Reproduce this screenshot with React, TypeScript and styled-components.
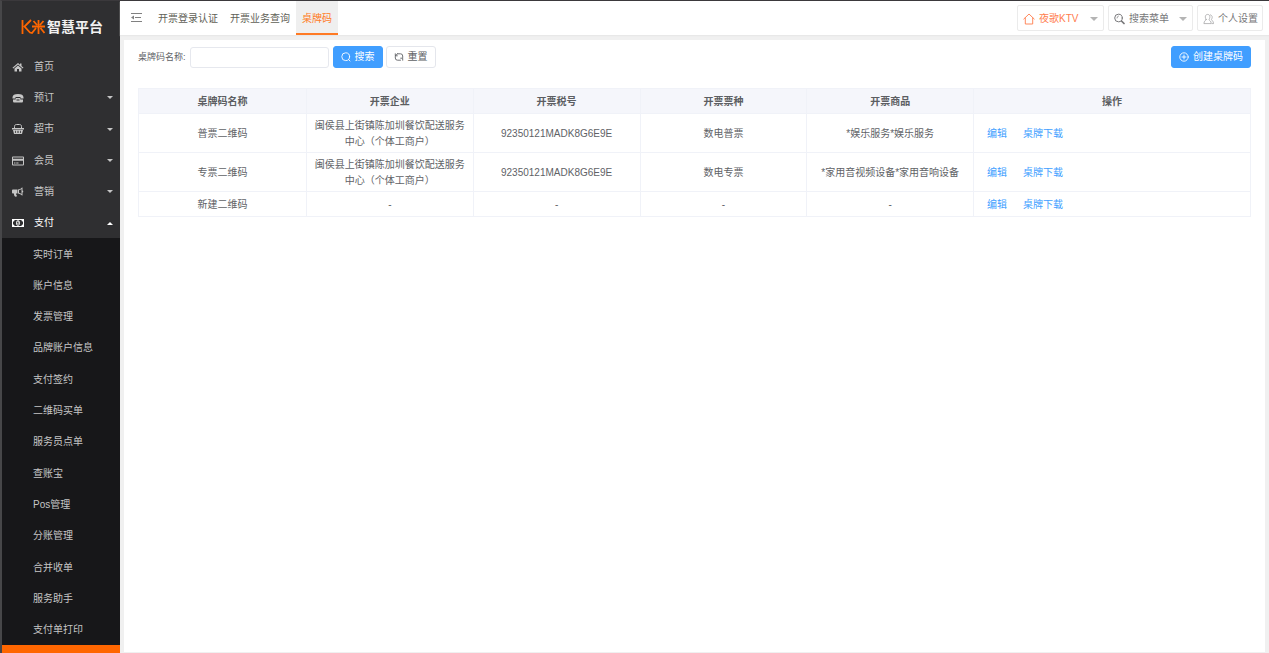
import React from "react";
import styled, { createGlobalStyle, css } from "styled-components";

const Global = createGlobalStyle`
  *, *::before, *::after { box-sizing: border-box; }
  body {
    margin: 0;
    background: #f0f0f0;
    color: #606266;
    font: 10px/16px "Liberation Sans", "Noto Sans CJK SC", sans-serif;
  }
  button, input { font: inherit; color: inherit; }
  ul { margin: 0; padding: 0; list-style: none; }
  a { color: inherit; text-decoration: none; }
`;

const Page = styled.div`
  display: flex;
  min-height: 100vh;
  border-top: 1px solid #3b393c;
  border-left: 2px solid #474749;
`;

const Sidebar = styled.aside`
  display: flex;
  flex-direction: column;
  flex: 0 0 118px;
  background: #2f2f31;
  color: #c6c6c6;
`;

const Brand = styled.a`
  display: flex;
  align-items: center;
  gap: 1px;
  height: 49px;
  padding: 2px 0 0 19px;
  color: #f2f2f2;
  font-size: 14px;
  font-weight: 700;
  line-height: 20px;
  white-space: nowrap;
  svg { flex: none; }
`;

const Nav = styled.nav`
  display: flex;
  flex: 1;
`;

const Menu = styled.ul`
  display: grid;
  grid-auto-rows: minmax(24px, 1fr);
  flex: 1;
`;

const MenuItem = styled.li`
  display: flex;
`;

const SubMenuItem = styled(MenuItem)`
  background: #171719;
`;

const menuRow = css`
  display: flex;
  align-items: center;
  flex: 1;
  border: 0;
  background: none;
  text-align: left;
  cursor: pointer;
`;

const MenuButton = styled.button<{ $open?: boolean }>`
  ${menuRow}
  gap: 10px;
  padding: 2px 7px 0 10px;
  color: ${(p) => (p.$open ? "#ffffff" : "#c6c6c6")};
  > svg { width: 12px; height: 10px; flex: none; }
`;

const SubLink = styled.a`
  ${menuRow}
  padding: 2px 0 0 31px;
`;

const Caret = styled.span<{ $up?: boolean; $size?: number; $color?: string }>`
  margin-left: auto;
  border: ${(p) => p.$size ?? 3}px solid transparent;
  ${(p) =>
    p.$up
      ? css`border-top: 0; border-bottom-color: currentColor;`
      : css`border-bottom: 0; border-top-color: currentColor;`}
  ${(p) => p.$color && css`color: ${p.$color};`}
`;

const SidebarFoot = styled.div`
  height: 8px;
  background: #ff6600;
`;

const Main = styled.div`
  display: flex;
  flex-direction: column;
  flex: 1;
  min-width: 0;
`;

const TopBar = styled.header`
  display: flex;
  height: 34px;
  padding-right: 6px;
  background: #ffffff;
  box-shadow: 0 1px 1px #e8e8e8;
`;

const Collapse = styled.button`
  display: grid;
  place-items: center;
  width: 32px;
  padding: 0;
  border: 0;
  background: none;
  color: #808080;
`;

const Tabs = styled.nav`
  display: flex;
  flex: 1;
`;

const Tab = styled.a<{ $active?: boolean }>`
  display: flex;
  align-items: center;
  padding: 4px 6px 0;
  border-bottom: 2px solid ${(p) => (p.$active ? "#ff7a24" : "transparent")};
  background: ${(p) => (p.$active ? "#efefef" : "transparent")};
  color: ${(p) => (p.$active ? "#ff7a24" : "#5f5f57")};
  white-space: nowrap;
`;

const Tools = styled.div`
  display: flex;
  align-items: center;
  gap: 4px;
`;

const ToolButton = styled.button<{ $accent?: boolean; $width: number }>`
  display: flex;
  align-items: center;
  gap: 4px;
  width: ${(p) => p.$width}px;
  height: 26px;
  padding: 1px 5px 0;
  border: 1px solid #ebebeb;
  border-radius: 2px;
  background: #ffffff;
  color: ${(p) => (p.$accent ? "#ff7d4d" : "#77777a")};
  white-space: nowrap;
  svg { flex: none; }
`;

const Panel = styled.main`
  flex: 1;
  margin: 5px 4px 1px;
  padding: 6px 14px 16px;
  background: #ffffff;
`;

const Filter = styled.form`
  display: flex;
  align-items: center;
  margin-bottom: 20px;
`;

const Field = styled.label`
  display: flex;
  align-items: center;
  gap: 4px;
  margin-right: 4px;
  font-size: 9px;
  white-space: nowrap;
`;

const TextBox = styled.input`
  width: 139px;
  height: 21px;
  padding: 0 6px;
  border: 1px solid #e6e8ee;
  border-radius: 3px;
  background: #ffffff;
  outline: none;
`;

const Button = styled.button<{ $primary?: boolean }>`
  display: flex;
  align-items: center;
  gap: 4px;
  height: 22px;
  margin-right: 3px;
  padding: 0 7px;
  border: 1px solid ${(p) => (p.$primary ? "#409eff" : "#e4e6ec")};
  border-radius: 3px;
  background: ${(p) => (p.$primary ? "#409eff" : "#ffffff")};
  color: ${(p) => (p.$primary ? "#ffffff" : "#606266")};
  white-space: nowrap;
  &:last-child { margin: 0 0 0 auto; }
`;

const Table = styled.table`
  width: 100%;
  border-collapse: collapse;
  table-layout: fixed;
  th, td {
    height: 25px;
    padding: 4px 7px 2px;
    border: 1px solid #f0f2f8;
    text-align: center;
    overflow-wrap: anywhere;
  }
  th { background: #f5f6fb; color: #5c5e62; font-weight: 700; }
  td:last-child { padding-left: 13px; text-align: left; }
`;

const RowLink = styled.a`
  margin-right: 16px;
  color: #409eff;
`;

const stroke = { fill: "none", stroke: "currentColor", strokeLinecap: "round", strokeLinejoin: "round" } as const;

const LogoMark = () => (
  <svg width="25" height="16" viewBox="0 0 25 16" fill="none" stroke="#ff6600" strokeWidth="1.8" aria-hidden="true">
    <path d="M1.500 1v14M10 1 3.500 7.500 9 13.500l2 .5 4-5M11 7.500h13M17.500 1v14M12.500 2l3.500 4M22.500 2 19 6M19.500 9l4 5" />
  </svg>
);

const HouseIcon = () => (
  <svg viewBox="0 0 24 20" fill="currentColor" aria-hidden="true">
    <path d="m12 2 4 3.500V3h3v5l4 3.500-1.500 1.500L12 5 2.500 13 1 11.500Z" />
    <path d="m12 7 7 6v6h-5v-5h-4v5H5v-6Z" />
  </svg>
);

const PhoneIcon = () => (
  <svg viewBox="0 0 24 20" fill="currentColor" aria-hidden="true">
    <path d="M1 9c0-5 4-7 11-7s11 2 11 7v2h-6V8H7v3H1Z" />
    <path d="M2 13h5l1-3h8l1 3h5v3c0 2-1 3-3 3H5c-2 0-3-1-3-3Zm7 0v2h6v-2Z" fillRule="evenodd" />
  </svg>
);

const BasketIcon = () => (
  <svg viewBox="0 0 24 20" fill="currentColor" aria-hidden="true">
    <path d="M5 9V5c0-3 2-4 4-4h6c2 0 4 1 4 4v4" fill="none" stroke="currentColor" strokeWidth="2" />
    <path d="M0 8h24v3H0Z" />
    <path d="M2 12h20l-2 8H4Zm4 1.500.5 4.500H8l-.5-4.500Zm5 0V18h2v-4.500Zm5.500 0L16 18h1.500l.5-4.500Z" fillRule="evenodd" />
  </svg>
);

const CardIcon = () => (
  <svg viewBox="0 0 24 20" fill="currentColor" aria-hidden="true">
    <path d="M2 1h20a2 2 0 0 1 2 2v14a2 2 0 0 1-2 2H2a2 2 0 0 1-2-2V3a2 2 0 0 1 2-2Zm0 2v2.500h20V3ZM2 9.500V17h20V9.500ZM4 13h3v2H4Zm4.500 0H13v2H8.500Z" fillRule="evenodd" />
  </svg>
);

const HornIcon = () => (
  <svg viewBox="0 0 24 20" fill="currentColor" aria-hidden="true">
    <path d="M2 5h9v8H8c0 2 1 3 2 5-1 2-4 2-5 0-1-2-1-3-1-5H2c-1 0-2-1-2-2V7c0-1 1-2 2-2Z" />
    <path d="M12 5c3 0 6-2 8-4h1v6c2 0 2 4 0 4v6h-1c-2-2-5-4-8-4Zm2 1.500v5c2 .5 3.500 1.200 5 2.500V4c-1.500 1.300-3 2-5 2.500Z" fillRule="evenodd" />
  </svg>
);

const MoneyIcon = () => (
  <svg viewBox="0 0 24 20" fill="currentColor" aria-hidden="true">
    <path d="M0 2h24v16H0Zm5 2c0 2-1 3-3 3v6c2 0 3 1 3 3h14c0-2 1-3 3-3V7c-2 0-3-1-3-3Z" fillRule="evenodd" />
    <path d="M12 4.500c5 0 5 11 0 11s-5-11 0-11ZM11 7l-1.500 1.500 1 .8.500-.3v3h-1V13h4v-1h-1V7Z" fillRule="evenodd" />
  </svg>
);

const CollapseIcon = () => (
  <svg width="11" height="10" viewBox="0 0 11 10" aria-hidden="true">
    <path d="M0 .5h11M4 4.500h6M0 8.500h11" stroke="currentColor" fill="none" />
    <path d="m0 4.500 3-2v4z" fill="currentColor" />
  </svg>
);

const HomeIcon = () => (
  <svg width="12" height="12" viewBox="0 0 12 12" {...stroke} strokeWidth=".9" aria-hidden="true">
    <path d="M.8 6 6 1l5.200 5M2.300 5v6h7.400V5" />
  </svg>
);

const FindIcon = () => (
  <svg width="11" height="12" viewBox="0 0 11 12" {...stroke} aria-hidden="true">
    <circle cx="4.500" cy="5" r="3.800" />
    <path d="m7.500 8 2.500 2.500" strokeWidth="1.700" />
    <path d="M3 5a2 2 0 0 1 1.500-2" strokeWidth=".7" />
  </svg>
);

const UserIcon = () => (
  <svg width="11" height="12" viewBox="0 0 12 12" {...stroke} strokeWidth=".8" opacity=".7" aria-hidden="true">
    <path d="M3.400 6.500C1.700 4 2.500 1 5 1s3.300 3 1.600 5.500c0 1.500 2.400 1.300 2.400 4.500H1c0-3.200 2.400-3 2.400-4.500Z" />
    <path d="M8 1.500c2.500.5 2.500 3 1.200 5 0 1 2.300 1.500 2.300 4.500H10" />
  </svg>
);

const SearchIcon = () => (
  <svg width="10" height="10" viewBox="0 0 10 10" {...stroke} strokeWidth=".9" aria-hidden="true">
    <circle cx="4.700" cy="4.700" r="3.900" />
    <path d="m7.500 7.500 1.500 1.500" />
  </svg>
);

const RefreshIcon = () => (
  <svg width="10" height="10" viewBox="0 0 10 10" {...stroke} strokeWidth=".9" aria-hidden="true">
    <path d="M3.500 1.800H6.500A2.200 2.200 0 0 1 8.700 4v1.500M1.300 4.500V6a2.200 2.200 0 0 0 2.200 2.200h3M1.300 1.800v2h2M8.700 8.200v-2h-2M1.300 3.800 3.500 1.800" />
  </svg>
);

const PlusIcon = () => (
  <svg width="10" height="10" viewBox="0 0 10 10" {...stroke} strokeWidth=".9" aria-hidden="true">
    <circle cx="5" cy="5" r="4.200" />
    <path d="M3 5h4M5 3v4" />
  </svg>
);

const menu = [
  { label: "首页", icon: <HouseIcon />, leaf: true },
  { label: "预订", icon: <PhoneIcon /> },
  { label: "超市", icon: <BasketIcon /> },
  { label: "会员", icon: <CardIcon /> },
  { label: "营销", icon: <HornIcon /> },
  { label: "支付", icon: <MoneyIcon />, open: true },
];

const payMenu = [
  "实时订单", "账户信息", "发票管理", "品牌账户信息", "支付签约", "二维码买单", "服务员点单",
  "查账宝", "Pos管理", "分账管理", "合并收单", "服务助手", "支付单打印",
];

const tabs = ["开票登录认证", "开票业务查询", "桌牌码"];

const columns = [
  { title: "桌牌码名称", width: "15.1%" },
  { title: "开票企业", width: "15%" },
  { title: "开票税号", width: "15%" },
  { title: "开票票种", width: "15%" },
  { title: "开票商品", width: "15%" },
  { title: "操作", width: "24.9%" },
];

const company = "闽侯县上街镇陈加圳餐饮配送服务中心（个体工商户）";

const rows = [
  ["普票二维码", company, "92350121MADK8G6E9E", "数电普票", "*娱乐服务*娱乐服务"],
  ["专票二维码", company, "92350121MADK8G6E9E", "数电专票", "*家用音视频设备*家用音响设备"],
  ["新建二维码", "-", "-", "-", "-"],
];

export default function App() {
  return (
    <>
      <Global />
      <Page>
        <Sidebar>
          <Brand href="#" aria-label="K米智慧平台">
            <LogoMark />
            智慧平台
          </Brand>
          <Nav>
            <Menu>
              {menu.map((m) => (
                <MenuItem key={m.label}>
                  <MenuButton type="button" $open={m.open} aria-expanded={m.leaf ? undefined : !!m.open}>
                    {m.icon}
                    {m.label}
                    {!m.leaf && <Caret $up={m.open} />}
                  </MenuButton>
                </MenuItem>
              ))}
              {payMenu.map((label) => (
                <SubMenuItem key={label}>
                  <SubLink href="#">{label}</SubLink>
                </SubMenuItem>
              ))}
            </Menu>
          </Nav>
          <SidebarFoot />
        </Sidebar>
        <Main>
          <TopBar>
            <Collapse type="button" aria-label="收起菜单"><CollapseIcon /></Collapse>
            <Tabs>
              {tabs.map((t, i) => (
                <Tab key={t} href="#" $active={i === 2}>{t}</Tab>
              ))}
            </Tabs>
            <Tools>
              <ToolButton type="button" $accent $width={87}>
                <HomeIcon />夜歌KTV<Caret $size={4} $color="#b4b4b4" />
              </ToolButton>
              <ToolButton type="button" $width={85}>
                <FindIcon />搜索菜单<Caret $size={4} $color="#b4b4b4" />
              </ToolButton>
              <ToolButton type="button" $width={66}>
                <UserIcon />个人设置
              </ToolButton>
            </Tools>
          </TopBar>
          <Panel>
            <Filter onSubmit={(e) => e.preventDefault()}>
              <Field>
                桌牌码名称:
                <TextBox type="text" />
              </Field>
              <Button type="submit" $primary><SearchIcon />搜索</Button>
              <Button type="reset"><RefreshIcon />重置</Button>
              <Button type="button" $primary><PlusIcon />创建桌牌码</Button>
            </Filter>
            <Table>
              <colgroup>
                {columns.map((c) => <col key={c.title} style={{ width: c.width }} />)}
              </colgroup>
              <thead>
                <tr>{columns.map((c) => <th key={c.title} scope="col">{c.title}</th>)}</tr>
              </thead>
              <tbody>
                {rows.map((r) => (
                  <tr key={r[0]}>
                    {r.map((v, i) => <td key={i}>{v}</td>)}
                    <td>
                      <RowLink href="#">编辑</RowLink>
                      <RowLink href="#">桌牌下载</RowLink>
                    </td>
                  </tr>
                ))}
              </tbody>
            </Table>
          </Panel>
        </Main>
      </Page>
    </>
  );
}
